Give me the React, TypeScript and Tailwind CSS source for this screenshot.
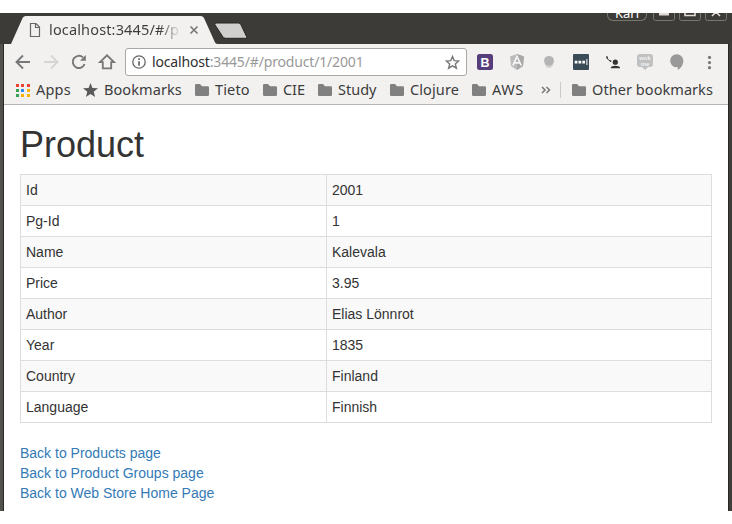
import type { ReactNode } from "react";

const rows = [
  ["Id", "2001"],
  ["Pg-Id", "1"],
  ["Name", "Kalevala"],
  ["Price", "3.95"],
  ["Author", "Elias Lönnrot"],
  ["Year", "1835"],
  ["Country", "Finland"],
  ["Language", "Finnish"],
];

const links = ["Back to Products page", "Back to Product Groups page", "Back to Web Store Home Page"];

const appColors = ["#ea4335", "#ea4335", "#ea4335", "#34a05a", "#2a8cf0", "#f4b400", "#34a05a", "#f4b400", "#f4b400"];

function Folder() {
  return (
    <svg className="h-3 w-[14px] shrink-0" viewBox="0 0 14 12">
      <path d="M0 1.2Q0 0 1.2 0H5L7 2.2H12.8Q14 2.2 14 3.4V10.8Q14 12 12.8 12H1.2Q0 12 0 10.8Z" fill="#808080" />
    </svg>
  );
}

function Bookmark({ icon, className, children }: { icon: ReactNode; className: string; children: ReactNode }) {
  return (
    <div className={"flex shrink-0 items-center gap-1.5 whitespace-nowrap " + className}>
      {icon}
      <span className="pb-0.5">{children}</span>
    </div>
  );
}

function TitleBar() {
  return (
    <div className="flex h-[31px] shrink-0 bg-[#3c3b37]">
      <div className="relative h-[31px] w-[245px] shrink-0">
        <svg className="absolute inset-0" width="256" height="31" viewBox="0 0 256 31">
          <path d="M11 31L22.6 5Q23.6 3 26 3H200.5Q203 3 204 5L215 29.5Q216 31 218 31Z" fill="#f2f1f0" />
          <path d="M216 10H238.5Q240.3 10 241 11.8L246.5 23.5Q247.2 25.3 245.5 25.3H225.5Q223.3 25.3 222.3 23L214.8 11.5Q214.4 10 216 10Z" fill="#d0cfcd" stroke="#272622" />
          <path d="M30.5 10.5H36L39.5 14V23.5H30.5ZM35.5 10.5V14.5H39.5" fill="none" stroke="#666" strokeWidth="1.2" />
          <path d="M190.5 13.5L197.5 20.5M197.5 13.5L190.5 20.5" stroke="#777" strokeWidth="1.6" />
        </svg>
        <div className="absolute left-[49px] top-[6px] h-5 w-[132px] overflow-hidden whitespace-nowrap bg-linear-to-r from-[#3c3c3c] from-84% to-transparent to-100% bg-clip-text text-[14.5px] leading-5 tracking-[0.15px] text-transparent">
          localhost:3445/#/product
        </div>
      </div>
      <div className="ml-auto flex h-2 items-start overflow-hidden pr-1">
        <div className="mr-[6px] flex h-2 w-10 items-end justify-center overflow-hidden rounded-b-md border border-t-0 border-[#77766f] text-[13px] leading-[18px] text-white">
          <span className="h-[14px] leading-[14px]">Kari</span>
        </div>
        <svg width="75" height="8" viewBox="0 0 75 8">
          <g fill="none" stroke="#77766f">
            <path d="M.5 0V5.5Q.5 7.5 2.5 7.5H19.5Q21.5 7.5 21.5 5.5V0" />
            <path d="M26.5 0V5.5Q26.5 7.5 28.5 7.5H45.5Q47.5 7.5 47.5 5.5V0" />
            <path d="M52.5 0V5.5Q52.5 7.5 54.5 7.5H71.5Q73.5 7.5 73.5 5.5V0" />
          </g>
          <path d="M6 0H16V2.5H6Z" fill="#dfdbd2" />
          <path d="M32 0V2.5H42V0M59 3L63 -1L67 3" fill="none" stroke="#dfdbd2" strokeWidth="1.6" />
        </svg>
      </div>
    </div>
  );
}

function Toolbar() {
  return (
    <div className="flex h-9 items-center">
      <svg className="shrink-0" width="121" height="36" viewBox="0 0 121 36" fill="none" stroke="#777" strokeWidth="1.9">
        <path d="M26 18H13M19 11.5L12.5 18L19 24.5" />
        <path d="M40 18H53M47 11.5L53.5 18L47 24.5" stroke="#d6d5d3" />
        <path d="M79 13.4A6.1 6.1 0 1 0 80.6 20" />
        <path d="M81.8 11V16.8H76Z" fill="#777" stroke="none" />
        <path d="M96 18.2H98.8V24.4H107.2V18.2H110L103 11.3Z" strokeWidth="1.8" />
      </svg>
      <div className="flex h-7 w-[342px] shrink-0 items-center rounded-[3px] border border-[#a8a7a6] bg-white pl-[6px]">
        <svg className="shrink-0" width="14" height="14" viewBox="0 0 14 14">
          <circle cx="7" cy="7" r="6.2" fill="none" stroke="#666" strokeWidth="1.3" />
          <path d="M6.2 3.3H7.9V5H6.2ZM6.2 6.2H7.9V10.8H6.2Z" fill="#666" />
        </svg>
        <span className="ml-[6px] whitespace-nowrap pb-px text-[14px] tracking-[-0.16px] text-[#999]">
          <span className="text-[#303030]">localhost</span>:3445/#/product/1/2001
        </span>
        <svg className="ml-auto mr-[6px] shrink-0" width="15" height="15" viewBox="0 0 15 15">
          <path d="M7.5 1.5L9.2 5.6L13.7 6L10.3 8.9L11.4 13.2L7.5 10.9L3.6 13.2L4.7 8.9L1.3 6L5.8 5.6Z" fill="none" stroke="#777" strokeWidth="1.4" />
        </svg>
      </div>
      <svg className="shrink-0" width="260" height="36" viewBox="467 44 260 36">
        <rect x="477" y="54" width="16" height="16" rx="2.5" fill="#563d7c" />
        <text x="485.1" y="66.6" textAnchor="middle" fontSize="12.5" fontWeight="700" fill="#fff" fontFamily="Liberation Sans">B</text>
        <path d="M517 54L524 56.4L523 66L517 70L511 66L510 56.4Z" fill="#bcbcbc" />
        <path d="M517 54L524 56.4L523 66L517 70Z" fill="#a9a9a9" />
        <path d="M512.8 65.5L517 56.6L521.2 65.5M514.5 62.8H519.5" fill="none" stroke="#f5f5f5" strokeWidth="1.7" />
        <circle cx="549" cy="63.7" r="4.2" fill="#d2d2d2" />
        <circle cx="549" cy="60.8" r="4.9" fill="#b4b4b4" />
        <rect x="573" y="54" width="16" height="16" rx="1" fill="#3b4c57" />
        <path d="M574.7 60.7H577.4V63.4H574.7ZM578.5 60.7H581.2V63.4H578.5ZM582.3 60.7H585V63.4H582.3ZM586.4 59H587.4V65H586.4Z" fill="#fff" />
        <path d="M606.9 57.6Q608 60.3 610.7 61.2" fill="none" stroke="#333" strokeWidth="1" />
        <path d="M606.2 56L607.8 56.6L607.7 58.6L606.5 58.4ZM609.6 60.2L611.4 60.6L611.2 62.1L609.7 61.6Z" fill="#333" />
        <circle cx="615.3" cy="62.2" r="2.6" fill="#333" />
        <path d="M610.8 68.3V67.6Q611.5 65.8 615.3 65.8Q619.2 65.8 620 67.6V68.3Z" fill="#333" />
        <path d="M640 54H650Q653 54 653 57V64Q653 67 650 67H648L645 70L642 67H640Q637 67 637 64V57Q637 54 640 54Z" fill="#c0c0c0" />
        <text x="645" y="60.2" textAnchor="middle" fontSize="5.8" fontWeight="700" fill="#f3f3f3" fontFamily="Liberation Sans">wok</text>
        <text x="645" y="65.6" textAnchor="middle" fontSize="5.8" fontWeight="700" fill="#f3f3f3" fontFamily="Liberation Sans">me</text>
        <path d="M676.8 54.2A6.7 6.5 0 0 1 683.4 60.8Q683.4 66.5 677.8 70V67.3H676.8A6.6 6.5 0 0 1 676.8 54.2Z" fill="#999" />
        <circle cx="709.5" cy="57.4" r="1.6" fill="#777" />
        <circle cx="709.5" cy="62.6" r="1.6" fill="#777" />
        <circle cx="709.5" cy="67.7" r="1.6" fill="#777" />
      </svg>
    </div>
  );
}

function BookmarksBar() {
  return (
    <div className="flex h-5 items-center pl-3 text-[14.5px] leading-5 text-[#3c3c3c]">
      <Bookmark
        className="w-[67px] tracking-[0.2px]"
        icon={
          <span className="grid w-[14px] shrink-0 grid-cols-3 gap-x-0.5 gap-y-0.5">
            {appColors.map((c, i) => (
              <i key={i} className="size-[3px]" style={{ backgroundColor: c }} />
            ))}
          </span>
        }
      >
        Apps
      </Bookmark>
      <Bookmark
        className="w-[112px] tracking-[0.08px]"
        icon={
          <svg className="shrink-0" width="15" height="14" viewBox="0 0 15 14">
            <path d="M7.5 0L9.4 4.9L15 5.3L10.7 8.8L12.1 14L7.5 11.1L2.9 14L4.3 8.8L0 5.3L5.6 4.9Z" fill="#5a5a5a" />
          </svg>
        }
      >
        Bookmarks
      </Bookmark>
      <Bookmark className="w-[68px] tracking-[0.15px]" icon={<Folder />}>Tieto</Bookmark>
      <Bookmark className="w-[55px] tracking-[-0.1px]" icon={<Folder />}>CIE</Bookmark>
      <Bookmark className="w-[72px]" icon={<Folder />}>Study</Bookmark>
      <Bookmark className="w-[82px] tracking-[0.1px]" icon={<Folder />}>Clojure</Bookmark>
      <Bookmark className="w-[69px] tracking-[0.5px]" icon={<Folder />}>AWS</Bookmark>
      <svg className="shrink-0" width="10" height="8" viewBox="0 0 10 8">
        <path d="M1 1L4 4L1 7M5.5 1L8.5 4L5.5 7" fill="none" stroke="#777" strokeWidth="1.5" />
      </svg>
      <div className="ml-[9px] mr-[11px] h-4 w-px shrink-0 bg-[#cbcac8]" />
      <Bookmark className="w-[145px] tracking-[0.06px]" icon={<Folder />}>Other bookmarks</Bookmark>
    </div>
  );
}

export default function App() {
  return (
    <div className="h-[524px] w-[732px] overflow-hidden bg-white pt-[13px] font-['Noto_Sans',sans-serif]">
      <div className="flex h-[498px] flex-col">
        <TitleBar />
        <div className="flex min-h-0 flex-1">
          <div className="w-1 shrink-0 border-r border-[#292824] bg-[#52514d]" />
          <div className="flex w-[724px] shrink-0 flex-col">
            <div className="h-[61px] shrink-0 border-b border-[#b6b4b2] bg-[#f2f1f0]">
              <Toolbar />
              <BookmarksBar />
            </div>
            <main className="flex-1 bg-white px-4 pt-5 font-['Liberation_Sans',Arial,sans-serif] text-sm leading-5 text-[#333]">
              <h1 className="mb-[10px] h-[39px] text-4xl leading-[39.6px]">Product</h1>
              <table className="mb-5 w-[692px] table-fixed border-collapse border border-[#ddd]">
                <colgroup>
                  <col className="w-[306px]" />
                  <col />
                </colgroup>
                <tbody>
                  {rows.map(([k, v]) => (
                    <tr key={k} className="h-[31px] odd:bg-[#f9f9f9]">
                      <td className="border border-[#ddd] px-[5px] py-[5px]">{k}</td>
                      <td className="border border-[#ddd] px-[5px] py-[5px]">{v}</td>
                    </tr>
                  ))}
                </tbody>
              </table>
              <nav className="flex flex-col items-start text-[#337ab7]">
                {links.map((l) => (
                  <a key={l} href="#">{l}</a>
                ))}
              </nav>
            </main>
          </div>
          <div className="w-1 shrink-0 border-l border-[#292824] bg-[#3f3e3b]" />
        </div>
      </div>
    </div>
  );
}
